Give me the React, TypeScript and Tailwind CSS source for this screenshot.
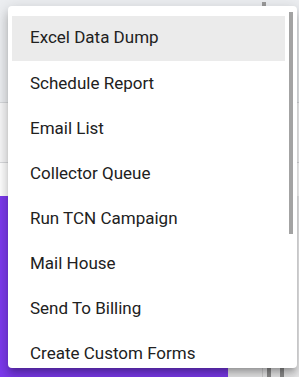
const items = [
  'Excel Data Dump',
  'Schedule Report',
  'Email List',
  'Collector Queue',
  'Run TCN Campaign',
  'Mail House',
  'Send To Billing',
  'Create Custom Forms',
];

export default function App() {
  return (
    <div className="relative w-[299px] h-[377px] overflow-hidden bg-[#f3f4f6] font-['Roboto',sans-serif]">
      {/* page behind the menu */}
      <div className="flex flex-col h-full">
        <div className="h-[103px] bg-[#eceef1] border-b border-[#d6d8db]" />
        <div className="h-[60px] bg-[#f7f7f8] border-b border-[#d9dadd]" />
        <div className="h-[33px] bg-white" />
        <div className="flex-1 flex">
          <div className="w-[228px] bg-[#7c3aed]" />
          <div className="flex-1 bg-[#ededee] flex items-end">
            <div className="ml-[34px] w-px h-[10px] bg-[#d4d4d4]" />
            <div className="ml-[4px] w-[4px] h-[10px] bg-[#8f8f8f]" />
            <div className="ml-[9px] w-[4px] h-[10px] bg-[#8f8f8f]" />
          </div>
        </div>
      </div>
      <div className="absolute left-[262px] top-[2px] w-[4px] h-[4px] bg-[#9a9a9a]" />

      {/* dropdown menu */}
      <div className="absolute left-[8px] top-[6px] w-[289px] h-[362px] bg-white rounded-[4px] shadow-[0_5px_5px_-3px_rgba(0,0,0,0.2),0_8px_10px_1px_rgba(0,0,0,0.14),0_3px_14px_2px_rgba(0,0,0,0.12)] overflow-hidden flex">
        <ul className="flex-1 pt-[10px] pl-[4px]">
          {items.map((label, i) => (
            <li
              key={label}
              className={`h-[45px] flex items-center pl-[18px] pb-[1px] text-[17px] text-[#212121] ${
                i === 0 ? 'bg-[#ebebeb] h-[44px] mb-px' : ''
              }`}
            >
              {label}
            </li>
          ))}
        </ul>
        <div className="w-[12px] pt-[6px] flex justify-center">
          <div className="w-[4px] h-[222px] bg-[#a3a3a3]" />
        </div>
      </div>
    </div>
  );
}
